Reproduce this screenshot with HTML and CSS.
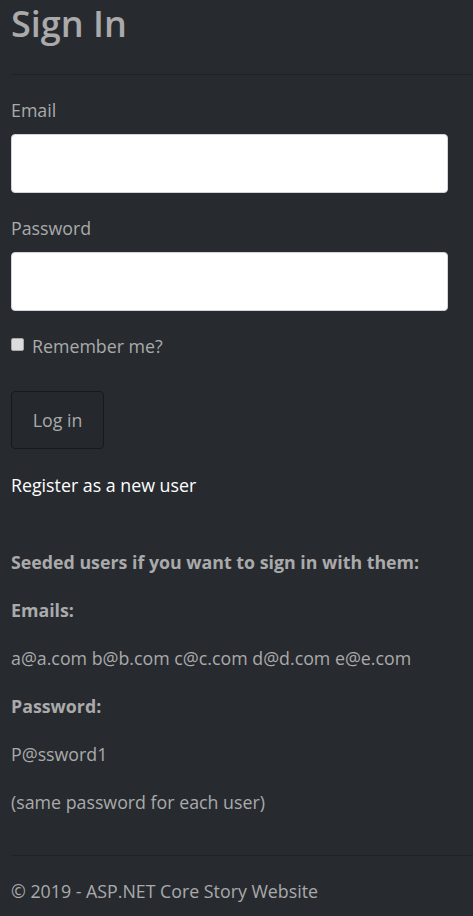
FILE: index.html
```html
<!DOCTYPE html>
<html>
<head>
<meta charset="utf-8">
<link rel="stylesheet" href="styles.css">
</head>
<body>
<main class="page">
  <h1 class="title">Sign In</h1>
  <hr class="rule">
  <form class="form">
    <label class="label" for="email">Email</label>
    <input class="input" id="email" type="email">
    <label class="label" for="pw">Password</label>
    <input class="input" id="pw" type="password">
    <label class="check"><input class="box" type="checkbox"><span>Remember me?</span></label>
    <button class="btn" type="button">Log in</button>
  </form>
  <p class="register"><a href="#">Register as a new user</a></p>
  <div class="info">
    <p class="bold">Seeded users if you want to sign in with them:</p>
    <p class="bold">Emails:</p>
    <p>a@a.com b@b.com c@c.com d@d.com e@e.com</p>
    <p class="bold">Password:</p>
    <p>P@ssword1</p>
    <p>(same password for each user)</p>
  </div>
  <hr class="rule foot-rule">
  <footer class="footer">© 2019 - ASP.NET Core Story Website</footer>
</main>
</body>
</html>
```
FILE: styles.css
```css
html, body {
  margin: 0;
  padding: 0;
  background: #272b30;
}
body {
  font-family: "Open Sans", "Noto Sans", sans-serif;
  font-size: 17.8px;
  line-height: 24px;
  color: #aaa;
}
.page {
  padding: 0 25px 0 11px;
}
.title {
  margin: 0;
  height: 48px;
  font-size: 36px;
  line-height: 48px;
  font-weight: 600;
  color: #aaa;
}
.rule {
  margin: 26px -25px 0 0;
  border: 0;
  border-top: 1px solid rgba(0,0,0,0.18);
  height: 0;
}
.form {
  display: flex;
  flex-direction: column;
  align-items: flex-start;
  margin-top: 23px;
}
.label {
  display: block;
  margin-bottom: 12px;
}
.input {
  box-sizing: border-box;
  width: 100%;
  height: 59px;
  margin: 0 0 23px;
  background: #fff;
  border: 1px solid #ced4da;
  border-radius: 4px;
}
.check {
  display: flex;
  align-items: center;
  gap: 8px;
  height: 24px;
}
.box {
  appearance: none;
  -webkit-appearance: none;
  margin: 0;
  width: 13px;
  height: 13px;
  background: #dcdcdc;
  border: 1px solid #a8a8a8;
  border-radius: 2px;
  position: relative;
  top: -2px;
}
.btn {
  margin-top: 33px;
  box-sizing: border-box;
  width: 93px;
  height: 58px;
  background: #25282d;
  color: #aaa;
  border: 1px solid #17191c;
  border-radius: 4px;
  font: inherit;
}
.register {
  margin: 24px 0 0;
}
.register a {
  color: #fff;
  text-decoration: none;
}
.info {
  margin-top: 53px;
}
.info p {
  margin: 0 0 24px;
}
.info p:last-child {
  margin-bottom: 0;
}
.bold {
  font-weight: 700;
}
.foot-rule {
  margin-top: 41px;
}
.footer {
  margin-top: 23px;
  padding-bottom: 20px;
}
```
